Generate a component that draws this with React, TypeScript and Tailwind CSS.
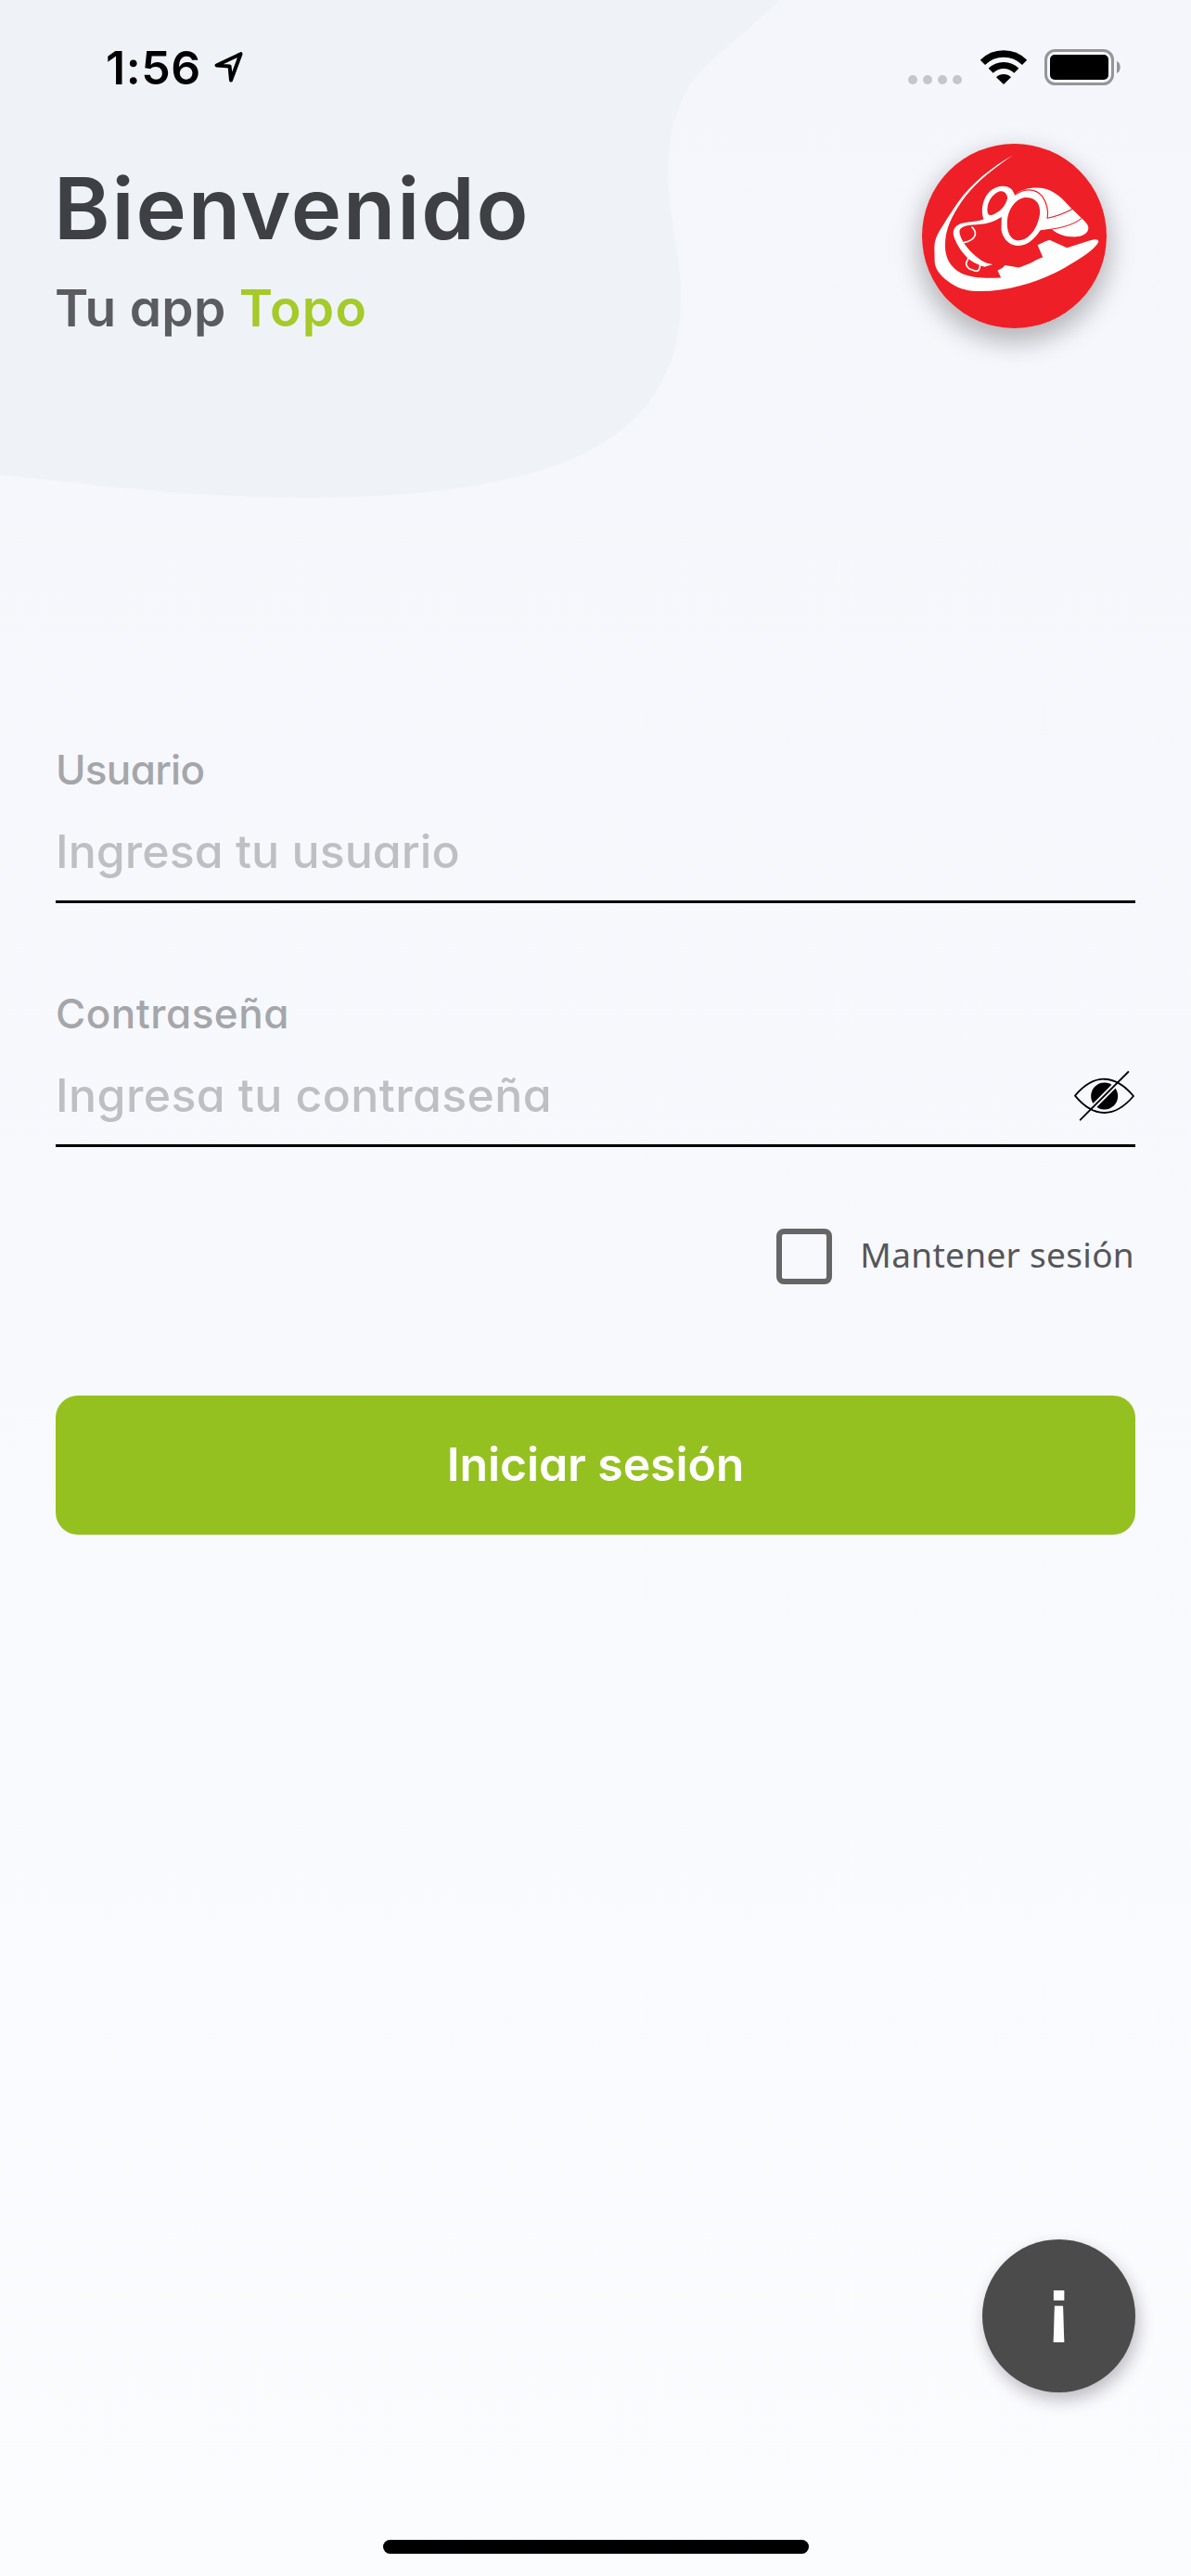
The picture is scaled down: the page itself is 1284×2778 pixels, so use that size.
import type { ReactNode } from 'react';

function StatusBar() {
  return (
    <div className="flex h-[155px] shrink-0 items-start pl-[114px] pr-[75px]">
      <span className="mt-[43px] whitespace-nowrap text-[50px] font-semibold leading-[60px] tracking-[0.6px] text-black">1:56</span>
      <svg className="ml-[13px] mt-[55px] h-[36px] w-[34px]" viewBox="0 0 34 36" fill="none">
        <path d="M3.5 15.5 L29.5 3.2 L19 31.5 L17.6 16.4 Z" stroke="black" strokeWidth="4" strokeLinejoin="round" />
      </svg>
      <div className="ml-auto mt-[81px] flex gap-[6px]">
        {[0, 1, 2, 3].map((n) => (
          <span key={n} className="size-[10px] rounded-full bg-[#c5c6ca]" />
        ))}
      </div>
      <svg className="ml-[19px] mt-[53px] h-[39px] w-[52px]" viewBox="0 0 52 39" fill="none">
        <path d="M3.4 14.4 A32 32 0 0 1 48.6 14.4" stroke="black" strokeWidth="7.4" />
        <path d="M12.2 23.2 A19.5 19.5 0 0 1 39.8 23.2" stroke="black" strokeWidth="7.2" />
        <path d="M18 30.2 A11.4 11.4 0 0 1 34 30.2 L26 38 Z" fill="black" />
      </svg>
      <svg className="ml-[18px] mt-[53px] h-[39px] w-[83px]" viewBox="0 0 83 39" fill="none">
        <rect x="1.5" y="1.5" width="72" height="36" rx="10" stroke="#949599" strokeWidth="3" />
        <rect x="6" y="6" width="63" height="27" rx="5" fill="black" />
        <path d="M78 13 C83 15 83 24 78 26 Z" fill="#949599" />
      </svg>
    </div>
  );
}

function Logo() {
  return (
    <div className="mr-[31px] size-[199px] shrink-0 rounded-full shadow-[0_12px_26px_4px_rgba(0,0,0,0.25)]">
      <svg className="size-full" viewBox="102 74.5 596 596" fill="none">
        <circle cx="400" cy="372.5" r="298" fill="#ee1f26" />
        <path
          d="M395 112 C330 148 262 202 218 264 C200 290 186 312 172 334 C152 364 142 385 142 410 L143 458 C146 485 168 508 195 525 C225 545 255 551 290 551 C380 550 460 525 530 492 C552 482 574 468 594 456 C630 434 662 412 672 391 C672 382 660 382 645 387 L570 411 L514 385 L502 389 L475 402 L492 441 C470 450 445 466 415 474 L370 467 L363 474 L346 484 L357 507 C310 510 262 508 228 492 C190 472 174 435 177 395 C178 350 200 300 243 244 C282 194 337 152 395 112 Z"
          fill="white"
        />
        <path
          d="M401 240 C425 218 468 212 505 221 C545 236 565 263 586 285 L614 312 C628 325 641 337 639 350 C636 368 612 377 585 375 C555 374 533 362 521 350 L484 355 L440 300 Z"
          fill="white"
        />
        <path
          d="M402 240 C428 225 470 222 488 245 C507 272 506 315 484 354 C462 388 438 404 412 404 C382 403 364 382 358 352 L359 311 C340 322 322 333 276 336 C240 337 222 345 223 360 C226 385 250 420 290 449 C302 457 312 462 331 464 L304 472 C290 468 280 463 268 457 C240 442 215 405 204 372 C199 350 212 332 244 329 C270 326 290 324 301 318 C290 290 298 250 322 227 C345 207 377 207 391 221 C396 227 399 234 402 240 Z"
          fill="white"
        />
        <path
          d="M430 249 C400 256 379 290 377 325 C375 365 392 389 415 387 C447 385 474 350 482 305 C487 265 465 245 430 249 Z M351 229 C328 238 312 265 313 290 C314 306 322 307 333 303 C352 295 372 278 378 250 C376 233 364 226 351 229 Z"
          fill="#ee1f26"
        />
        <path d="M262 343 C282 360 279 385 236 394" stroke="white" strokeWidth="5" />
        <path d="M253 441 L245 459 Q243 468 254 478 L272 485 Q284 488 287 479 L291 462" stroke="white" strokeWidth="5" />
        <path d="M401 240 C430 219 468 216 490 244 C505 265 510 292 507 315 C535 309 562 300 588 285" stroke="#ee1f26" strokeWidth="3.5" />
        <path d="M485 355 C540 349 585 341 618 315" stroke="#ee1f26" strokeWidth="3" />
      </svg>
    </div>
  );
}

function EyeOff() {
  return (
    <svg className="mt-[2px] h-[56px] w-[66px]" viewBox="174 104 198 168" fill="none">
      <path d="M177 187 C237 115 305 115 366 188 C305 260 237 260 177 187 Z" stroke="black" strokeWidth="5.5" />
      <circle cx="272" cy="188" r="43.5" fill="black" />
      <path d="M306 153 L232 227" stroke="#f7f8fd" strokeWidth="17" />
      <path d="M349 110 L194 265" stroke="black" strokeWidth="5.5" strokeLinecap="round" />
    </svg>
  );
}

function Field({ label, placeholder, children }: { label: ReactNode; placeholder: ReactNode; children?: ReactNode }) {
  return (
    <div className="flex h-[170px] flex-col border-b-[3px] border-black">
      <span className="h-[50px] whitespace-nowrap pt-px text-[44px] font-medium leading-[50px] text-[#a5a6aa]">{label}</span>
      <div className="mt-[34px] flex h-[60px] items-center justify-between">
        <span className="whitespace-nowrap text-[50px] font-medium leading-[60px] text-[#bebfc3]">{placeholder}</span>
        {children}
      </div>
    </div>
  );
}

export default function App() {
  return (
    <div
      className="relative flex h-[2778px] w-[1284px] flex-col overflow-hidden bg-linear-to-b from-[#f5f6fb] via-[#f8f9fd] to-[#fbfcfe] font-[Inter,sans-serif]"
      style={{ fontFeatureSettings: "'cv11'" }}
    >
      <svg className="absolute left-0 top-0 h-[560px] w-[860px]" viewBox="0 0 860 560">
        <path
          d="M0 0 H841 C822 18 803 34 788 47 C765 67 746 84 738 102 C726 129 720 154 720 182 C720 230 734 272 734 321 C734 350 730 376 718 402 C704 433 682 460 643 482 C600 507 510 537 327 537 C215 537 110 524 0 512 Z"
          fill="#eff3f8"
        />
      </svg>
      <div className="relative flex flex-1 flex-col">
        <StatusBar />
        <header className="flex h-[199px] justify-between px-[60px]">
          <div className="pt-[20px]">
            <h1 className="-ml-[2px] whitespace-nowrap text-[92px] font-semibold leading-[100px] tracking-[1.9px] text-[#3e4043]">Bienvenido</h1>
            <p className="-ml-px mt-[27px] whitespace-nowrap text-[55px] font-semibold leading-[60px] text-[#5b5c60]">
              <span className="tracking-[0.3px]">Tu app </span>
              <span className="tracking-[1.3px] text-[#a5ca29]">Topo</span>
            </p>
          </div>
          <Logo />
        </header>

        <main className="mt-[450px] flex flex-col px-[60px]">
          <div className="flex flex-col gap-[93px]">
            <Field
              label={<span className="tracking-[-0.7px]">Usuario</span>}
              placeholder={<span className="tracking-[0.05px]">Ingresa tu usuario</span>}
            />
            <Field
              label={<span className="tracking-[0.5px]">Contraseña</span>}
              placeholder={<span className="tracking-[0.4px]">Ingresa tu contraseña</span>}
            >
              <EyeOff />
            </Field>
          </div>
          <label className="mt-[88px] flex h-[60px] items-center justify-end">
            <span className="size-[60px] rounded-[8px] border-[6px] border-[#666666]" />
            <span className="-mt-[4px] ml-[30px] mr-px whitespace-nowrap font-['Noto_Sans',sans-serif] text-[37px] leading-[50px] tracking-[0.3px] text-[#55565a]">
              Mantener sesión
            </span>
          </label>
          <button className="mt-[120px] h-[150px] rounded-[24px] bg-[#94c120] pb-[2px] text-[50px] font-semibold leading-[60px] tracking-[-0.1px] text-white">
            Iniciar sesión
          </button>
        </main>

        <footer className="mt-auto flex flex-col items-center px-[60px] pb-[24px]">
          <button className="flex size-[165px] items-center justify-center self-end rounded-full bg-[#4b4b4b] shadow-[3px_8px_18px_0_rgba(30,20,40,0.28)]">
            <span className="-mt-[25px] font-['Liberation_Sans',sans-serif] text-[81px] font-bold leading-[80px] text-white">¡</span>
          </button>
          <div className="mt-[159px] h-[15px] w-[459px] rounded-full bg-black" />
        </footer>
      </div>
    </div>
  );
}
